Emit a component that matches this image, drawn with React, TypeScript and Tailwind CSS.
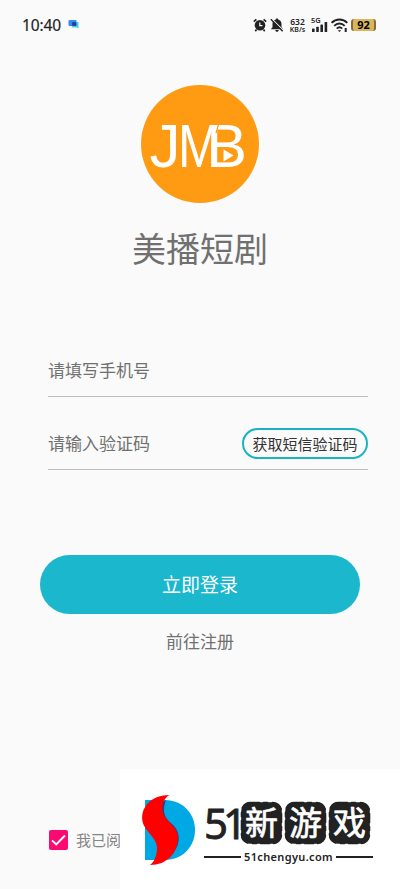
function StatusBar() {
  return (
    <header className="flex h-[50px] shrink-0 items-center pl-[22px] pr-6 text-[#222]">
      <span className="font-['Noto_Sans',sans-serif] text-[15.5px] leading-5 tracking-[-0.1px] [-webkit-text-stroke:0.2px_#222]">
        10:40
      </span>
      <svg className="ml-[7px]" width="12" height="10" viewBox="0 0 12 10">
        <rect x="0.5" y="0" width="8" height="6" rx="1" fill="#3d86f0" />
        <path d="M4 2h6.500v6.500l-2-1H4z" fill="#4ccfe5" />
        <rect x="4" y="2" width="4.500" height="4" rx="1" fill="#1648a8" />
      </svg>

      <div className="ml-auto flex items-center">
        <svg width="14" height="14" viewBox="0 0 14 14" fill="none" stroke="#222">
          <circle cx="7" cy="7.300" r="5.300" fill="#222" stroke="none" />
          <path d="M.8 3.600 3.400 1.300M13.200 3.600 10.600 1.300M3.500 11.500 2.300 13.300M10.500 11.500l1.200 1.800" strokeWidth="1.600" />
          <path d="M6.800 4.500v3.200h2.600" stroke="#fafafa" strokeWidth="1.200" />
        </svg>
        <svg className="ml-[3px]" width="14" height="14" viewBox="0 0 14 14">
          <path d="M7 .4c-.8 0-1.200.5-1.200 1.100C3.500 2.100 2.500 4 2.500 6v3.200L.8 11.300h12.400l-1.700-2.100V6c0-2-1-3.900-3.300-4.500C8.200.9 7.800.4 7 .4zM5.300 12h3.400c0 1.200-.8 1.800-1.700 1.800s-1.700-.6-1.700-1.800z" fill="#222" />
          <path d="M1.800.8 14 13" stroke="#fafafa" strokeWidth="1.200" />
          <path d="M.8 1.300 12.700 13.200" stroke="#222" strokeWidth="1.400" />
        </svg>
        <div className="ml-[5px] flex w-[17px] flex-col items-center font-['Noto_Sans',sans-serif] font-semibold">
          <span className="text-[8.5px] leading-[8px]">632</span>
          <span className="text-[7px] leading-[7px]">KB/s</span>
        </div>
        <svg className="ml-[5px] overflow-visible" width="18" height="16" viewBox="0 0 18 16" fill="#222">
          <text x="0" y="6" fontSize="7.500" fontWeight="600" fontFamily="Noto Sans, sans-serif">5G</text>
          <rect x="1" y="11.500" width="2.600" height="3.500" rx=".6" />
          <rect x="5.200" y="9.700" width="2.600" height="5.300" rx=".6" />
          <rect x="9.400" y="7.500" width="2.600" height="7.500" rx=".6" />
          <rect x="13.600" y="5" width="2.600" height="10" rx=".6" />
        </svg>
        <svg className="ml-0.5" width="17" height="15" viewBox="0 0 17 15" fill="none" stroke="#222">
          <path d="M.6 4.800c4.400-4.500 11.300-4.500 15.700 0M3.200 7.800c3-3 7.500-3 10.500 0" strokeWidth="1.900" />
          <path d="M5.700 10.600c1.700-1.600 3.800-1.600 5.500 0" strokeWidth="1.800" />
          <path d="M6.700 12.200h3.500l-1.700 1.900z" fill="#222" stroke="none" />
          <path d="M14.700 10v4" strokeWidth="2" />
        </svg>
        <div className="ml-[3px] flex h-3 w-[25px] items-center justify-center rounded-[3px] border-x-2 border-[#8a6a3c] bg-[#d9b65c] font-['Noto_Sans',sans-serif] text-[11px] font-bold leading-3 text-black">
          92
        </div>
      </div>
    </header>
  );
}

function Logo() {
  return (
    <svg className="shrink-0" width="118" height="118" viewBox="0 0 118 118">
      <circle cx="59" cy="59" r="59" fill="#ff9b13" />
      <g fill="#fff" fontSize="62" fontFamily="Liberation Sans, Arial, sans-serif">
        <text transform="translate(8.500 82)">J</text>
        <text transform="translate(37 82) scale(.81 1)">M</text>
        <text transform="translate(65.500 82) scale(.98 1)">B</text>
      </g>
      {/* slit between M and B, play mark */}
      <path d="M78 38 75 48" stroke="#ff9b13" strokeWidth="1.200" />
      <path d="M82.500 64.500v12l10-6z" fill="#fff" />
    </svg>
  );
}

function Tile({ char }: { char: string }) {
  return (
    <svg className="overflow-visible" width="43" height="44" viewBox="0 0 43 44">
      <rect x="1.200" y="1.200" width="40.600" height="41.600" rx="9" fill="#222" />
      <rect
        x="1.500"
        y="1.500"
        width="40"
        height="41"
        rx="9"
        fill="none"
        stroke="#222"
        strokeWidth="1.600"
        strokeLinecap="round"
        strokeDasharray="9 4 4 5 12 4"
      />
      <text
        x="21.500"
        y="33.500"
        textAnchor="middle"
        fontSize="33"
        fontFamily="Noto Sans CJK SC, sans-serif"
        fill="#fff"
        stroke="#fff"
        strokeWidth=".7"
        strokeLinejoin="round"
      >
        {char}
      </text>
    </svg>
  );
}

function Watermark() {
  const flame =
    "M28.700 2C10 2 0 14 1.300 27 2.500 38 16 44 16 55c0 8-3 14-7 17 17 0 28-12 28-28 0-12-16-16-15.500-29C21.700 8 24.500 4 28.700 2z";
  return (
    <div className="absolute bottom-0 right-0 flex h-[120px] w-[280px] bg-white pl-[21px] pt-6">
      <svg className="shrink-0" width="55" height="74" viewBox="0 0 55 74">
        <path d="M4 7h20c18 0 30 14 30 30S42 67 24 67H4z" fill="#00a8e4" />
        <path d="M25 7c-5 13 0 19 6 24 9 8 10 21-3 34l-8-6V10z" fill="#273d86" />
        <path d={flame} fill="#fe0000" />
      </svg>
      <div className="ml-2 flex w-[169px] flex-col pt-2">
        <div className="flex h-[44px] items-center text-[#222]">
          <span className="w-[36px] font-['Noto_Sans',sans-serif] text-[42px] leading-[42px] tracking-[-5px] [-webkit-text-stroke:0.8px_#222]">
            51
          </span>
          <div className="flex gap-[1px]">
            {["新", "游", "戏"].map((char) => (
              <Tile key={char} char={char} />
            ))}
          </div>
        </div>
        <div className="mt-[4px] flex items-center gap-[3px] whitespace-nowrap font-['Noto_Sans',sans-serif] text-[11px] font-semibold leading-4 tracking-[0.35px] text-[#222]">
          <span className="h-0.5 flex-1 bg-[#222]" />
          51chengyu.com
          <span className="h-0.5 flex-1 bg-[#222]" />
        </div>
      </div>
    </div>
  );
}

export default function App() {
  return (
    <main className="relative flex h-[889px] w-[400px] flex-col overflow-hidden bg-[#fafafa] font-['Noto_Sans_CJK_SC',sans-serif] text-[#707070]">
      <StatusBar />

      <section className="flex flex-col items-center pt-[35px]">
        <Logo />
        <h1 className="mt-5 text-[34px] leading-[50px]">美播短剧</h1>
      </section>

      <form className="mt-[73px] flex flex-col">
        <div className="ml-12 mr-8 flex h-[51px] items-center border-b border-[#bdbdbd] pb-0.5">
          <input
            type="tel"
            placeholder="请填写手机号"
            className="w-full text-[17px] leading-6 outline-none placeholder:text-[#707070]"
          />
        </div>
        <div className="ml-12 mr-8 mt-[22px] flex h-[51px] items-center border-b border-[#bdbdbd] pb-0.5">
          <input
            type="text"
            placeholder="请输入验证码"
            className="w-0 flex-1 text-[17px] leading-6 outline-none placeholder:text-[#707070]"
          />
          <button
            type="button"
            className="h-[31px] w-[126px] rounded-full border-2 border-[#19b3c5] text-[15px] leading-none text-[#333]"
          >
            获取短信验证码
          </button>
        </div>
        <button
          type="button"
          className="mx-10 mt-[85px] h-[59px] rounded-full bg-[#1ab7cd] text-[19px] text-white"
        >
          立即登录
        </button>
      </form>

      <a className="mt-[15px] self-center text-[17px] leading-6">前往注册</a>

      <label className="mt-auto mb-[38px] ml-[49px] flex items-center gap-2">
        <svg width="19" height="20" viewBox="0 0 19 20">
          <rect width="19" height="20" rx="2" fill="#fb0a72" />
          <path d="m3 10.300 4.200 4.200L16 5.500" fill="none" stroke="#fff" strokeWidth="1.900" />
        </svg>
        <span className="text-[15px] leading-[22px] text-[#858585]">我已阅</span>
      </label>

      <Watermark />
    </main>
  );
}
